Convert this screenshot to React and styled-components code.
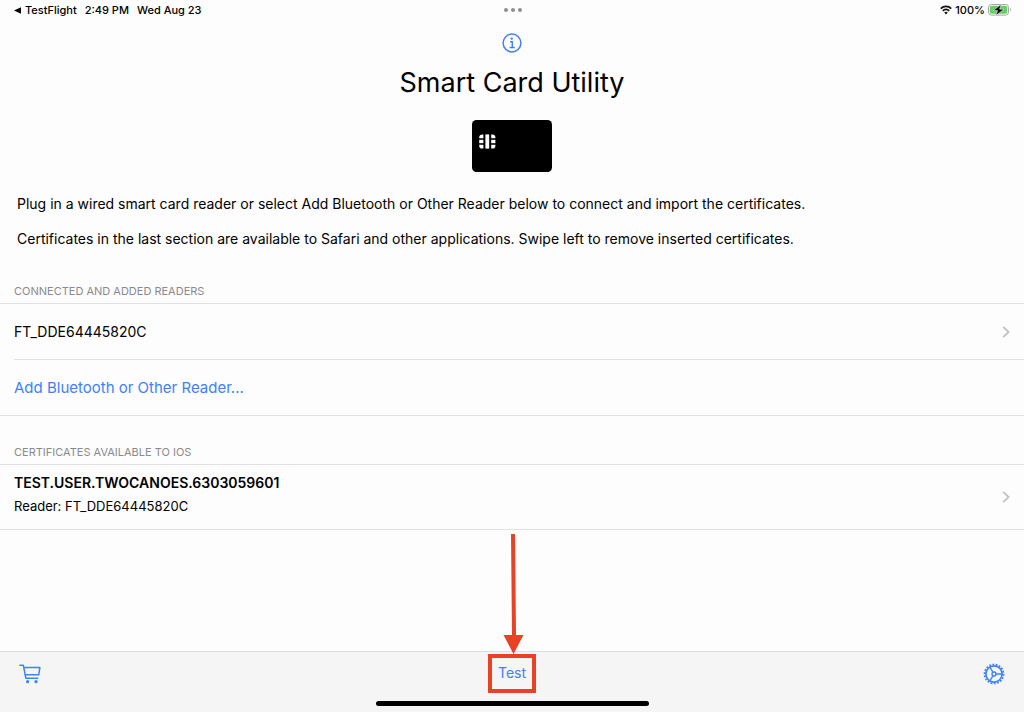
import styled, { createGlobalStyle } from "styled-components";

const readers = ["FT_DDE64445820C"];
const certificates = [
    { name: "TEST.USER.TWOCANOES.6303059601", reader: "FT_DDE64445820C" },
];

const WifiIcon = () => (
    <svg width="12" height="10" viewBox="0 0 12 10" fill="none" stroke="#111" strokeWidth="1.8" aria-hidden="true">
        <path d="M0.8 3.6a7.4 7.4 0 0 1 10.4 0" />
        <path d="M2.8 5.8a4.6 4.6 0 0 1 6.4 0" />
        <path d="M6 9.4L4.2 7.5a2.6 2.6 0 0 1 3.6 0z" fill="#111" stroke="none" />
    </svg>
);

const BatteryIcon = () => (
    <svg width="24" height="12" viewBox="0 0 24 12" aria-hidden="true">
        <rect x="0.5" y="0.5" width="20" height="10.6" rx="3" fill="#fdfdfd" stroke="#a5a5a5" />
        <rect x="1.8" y="1.8" width="17.4" height="8" rx="1.8" fill="#67ce67" />
        <path d="M22 4v3.6c1.2-0.4 1.2-3.2 0-3.6z" fill="#a5a5a5" />
        <path d="M13 0.4L5.4 6.6h4.2L8 11.6l7.8-6.4h-4.2z" fill="#000" stroke="#fdfdfd" strokeWidth="0.5" />
    </svg>
);

const InfoIcon = () => (
    <svg width="20" height="20" viewBox="0 0 20 20" fill="none" stroke="#3e82f7" aria-hidden="true">
        <circle cx="10" cy="10" r="8.9" strokeWidth="1.5" />
        <circle cx="9.7" cy="5.6" r="1.2" fill="#3e82f7" stroke="none" />
        <path d="M8 8.7h2.3v5.6M7.6 14.5h5.2" strokeWidth="1.4" />
    </svg>
);

const CardIcon = () => (
    <svg width="80" height="52" viewBox="0 0 80 52" aria-hidden="true">
        <rect width="80" height="52" rx="4.5" fill="#000" />
        <g fill="#fff">
            <path d="M11.4 14.4v3.8H7.2v-0.6a3.2 3.2 0 0 1 3.2-3.2z" />
            <path d="M19.2 14.4v3.8h4.2v-0.6a3.2 3.2 0 0 0-3.2-3.2z" />
            <path d="M11.4 28.6v-3.8H7.2v0.6a3.2 3.2 0 0 0 3.2 3.2z" />
            <path d="M19.2 28.6v-3.8h4.2v0.6a3.2 3.2 0 0 1-3.2 3.2z" />
            <rect x="7.2" y="19.8" width="4.2" height="3.4" />
            <rect x="19.2" y="19.8" width="4.2" height="3.4" />
            <rect x="13.4" y="14.4" width="3.8" height="14.2" />
        </g>
    </svg>
);

const ChevronIcon = () => (
    <svg width="8" height="12" viewBox="0 0 8 12" fill="none" stroke="#c2c2c4" strokeWidth="1.8" strokeLinecap="round" strokeLinejoin="round" aria-hidden="true">
        <path d="M1.6 1.4L6.6 6l-5 4.6" />
    </svg>
);

const CartIcon = () => (
    <svg width="22" height="20" viewBox="0 0 22 20" fill="none" stroke="#3e82f7" strokeWidth="1.5" strokeLinecap="round" strokeLinejoin="round" aria-hidden="true">
        <path d="M0.9 1.2h3.4l2.6 13.1h11.8" />
        <path d="M4.8 3.6h16.1l-1.2 7.2H6.3" />
        <circle cx="8.6" cy="17.7" r="1.6" fill="#3e82f7" stroke="none" />
        <circle cx="17" cy="17.7" r="1.6" fill="#3e82f7" stroke="none" />
    </svg>
);

const GearIcon = () => (
    <svg width="22" height="22" viewBox="0 0 22 22" fill="none" stroke="#3e82f7" aria-hidden="true">
        {/* 18 teeth around the rim */}
        <circle cx="11" cy="11" r="9.5" strokeWidth="1.7" pathLength="36" strokeDasharray="1.1 0.9" />
        <circle cx="11" cy="11" r="8.1" strokeWidth="1.7" />
        <circle cx="11" cy="11" r="2" strokeWidth="1.4" />
        <path d="M13.1 11h6.1M9.9 9.2L6.8 4M9.9 12.8L6.8 18" strokeWidth="1.4" />
    </svg>
);

const App = () => (
    <>
        <GlobalStyle />
        <Screen>
            <StatusBar>
                <StatusGroup>
                    <BackLink href="#testflight">
                        <svg width="7" height="7" viewBox="0 0 7 7" aria-hidden="true">
                            <path d="M0 3.5L7 0.3v6.4z" fill="#000" />
                        </svg>
                        TestFlight
                    </BackLink>
                    <span>2:49 PM</span>
                    <span>Wed Aug 23</span>
                </StatusGroup>
                <Dots aria-label="Multitasking">
                    <i />
                    <i />
                    <i />
                </Dots>
                <StatusGroup $end>
                    <WifiIcon />
                    <span>100%</span>
                    <BatteryIcon />
                </StatusGroup>
            </StatusBar>

            <Header>
                <IconButton aria-label="About">
                    <InfoIcon />
                </IconButton>
                <Title>Smart Card Utility</Title>
                <CardIcon />
            </Header>

            <Intro>
                <p>Plug in a wired smart card reader or select Add Bluetooth or Other Reader below to connect and import the certificates.</p>
                <p>Certificates in the last section are available to Safari and other applications. Swipe left to remove inserted certificates.</p>
            </Intro>

            <Section>
                <SectionTitle>Connected and added readers</SectionTitle>
                <List>
                    {readers.map((reader) => (
                        <li key={reader}>
                            <Row>
                                {reader}
                                <ChevronIcon />
                            </Row>
                        </li>
                    ))}
                    <li>
                        <Row $accent>Add Bluetooth or Other Reader...</Row>
                    </li>
                </List>
            </Section>

            <Section>
                <SectionTitle>Certificates available to iOS</SectionTitle>
                <List>
                    {certificates.map((cert) => (
                        <li key={cert.name}>
                            <Row $tall>
                                <CertText>
                                    <strong>{cert.name}</strong>
                                    <small>Reader: {cert.reader}</small>
                                </CertText>
                                <ChevronIcon />
                            </Row>
                        </li>
                    ))}
                </List>
            </Section>

            <Toolbar>
                <ToolbarItems>
                    <IconButton aria-label="Store">
                        <CartIcon />
                    </IconButton>
                    <Highlight>
                        <Arrow width="22" height="122" viewBox="0 0 22 122" fill="#ea4025" aria-hidden="true">
                            <path d="M9 2h4l1 101h7.5L11.5 122 1.5 103H10z" />
                        </Arrow>
                        <TestButton>Test</TestButton>
                    </Highlight>
                    <IconButton aria-label="Settings">
                        <GearIcon />
                    </IconButton>
                </ToolbarItems>
                <HomeIndicator />
            </Toolbar>
        </Screen>
    </>
);

const GlobalStyle = createGlobalStyle`
*{
    box-sizing: border-box;
    margin: 0;
    padding: 0;
}

body{
    background: #fdfdfd;
    color: #000;
    font-family: Inter, "Liberation Sans", sans-serif;
    font-size: 15px;
}

button{
    border: none;
    background: none;
    color: inherit;
    font: inherit;
    cursor: pointer;
}

svg{
    display: block;
    flex-shrink: 0;
}
`;

const Screen = styled.main`
display: flex;
flex-direction: column;
min-height: 100vh;
`;

const StatusBar = styled.div`
display: grid;
grid-template-columns: 1fr auto 1fr;
align-items: center;
height: 20px;
padding: 0 12px 0 14px;
font-size: 11px;
font-weight: 500;
`;

const StatusGroup = styled.div`
display: flex;
align-items: center;
justify-content: ${({ $end }) => ($end ? "flex-end" : "flex-start")};
gap: ${({ $end }) => ($end ? "3px" : "8px")};
`;

const BackLink = styled.a`
display: flex;
align-items: center;
gap: 4px;
color: inherit;
text-decoration: none;
`;

const Dots = styled.div`
display: flex;
gap: 3px;

i{
    width: 4px;
    height: 4px;
    border-radius: 50%;
    background: #8e8e8e;
}
`;

const Header = styled.header`
display: flex;
flex-direction: column;
align-items: center;
padding-top: 13px;
`;

const IconButton = styled.button`
display: flex;
`;

const Title = styled.h1`
margin: 12px 0 20px;
font-size: 27px;
font-weight: 400;
line-height: 35px;
`;

const Intro = styled.div`
display: grid;
gap: 15px;
padding: 22px 17px 0;
font-size: 14px;
line-height: 20px;
`;

const Section = styled.section`
padding-top: 31px;

& + &{
    padding-top: 25px;
}
`;

const SectionTitle = styled.h2`
padding: 0 14px 1px;
color: #8a8a8e;
font-size: 11px;
font-weight: 400;
line-height: 22px;
text-transform: uppercase;
`;

const List = styled.ul`
border: solid #e0e0e1;
border-width: 1px 0;
list-style: none;

li{
    padding-left: 14px;
}

li + li button{
    border-top: 1px solid #e0e0e1;
}
`;

const Row = styled.button`
display: flex;
align-items: center;
justify-content: space-between;
width: 100%;
min-height: ${({ $tall, $accent }) => ($tall ? "64px" : $accent ? "56px" : "55px")};
padding-right: 14px;
color: ${({ $accent }) => ($accent ? "#3e82f7" : "#000")};
font-size: ${({ $accent }) => ($accent ? "15px" : "14px")};
text-align: left;
`;

const CertText = styled.span`
display: grid;
gap: 3px;
padding-bottom: 5px;
line-height: 20px;

strong{
    font-weight: 600;
}

small{
    font-size: 13px;
}
`;

const Toolbar = styled.footer`
display: flex;
flex-direction: column;
align-items: center;
margin-top: auto;
padding-bottom: 6px;
border-top: 1px solid #dcdcdd;
background: #f5f5f5;
`;

const ToolbarItems = styled.nav`
display: grid;
grid-template-columns: 1fr auto 1fr;
align-items: center;
width: 100%;
padding: 2px 19px 8px;

> :last-child{
    justify-self: end;
}
`;

/* call-out box around the Test button, with an arrow above it */
const Highlight = styled.div`
position: relative;
border: 4px solid #ea4025;
`;

const Arrow = styled.svg`
position: absolute;
bottom: calc(100% + 4px);
left: 50%;
margin-left: -10px;
pointer-events: none;
`;

const TestButton = styled.button`
display: block;
padding: 5px 6px 7px;
color: #3e82f7;
font-size: 14px;
line-height: 19px;
`;

const HomeIndicator = styled.div`
width: 273px;
max-width: 60%;
height: 5px;
border-radius: 3px;
background: #000;
`;

export default App;
